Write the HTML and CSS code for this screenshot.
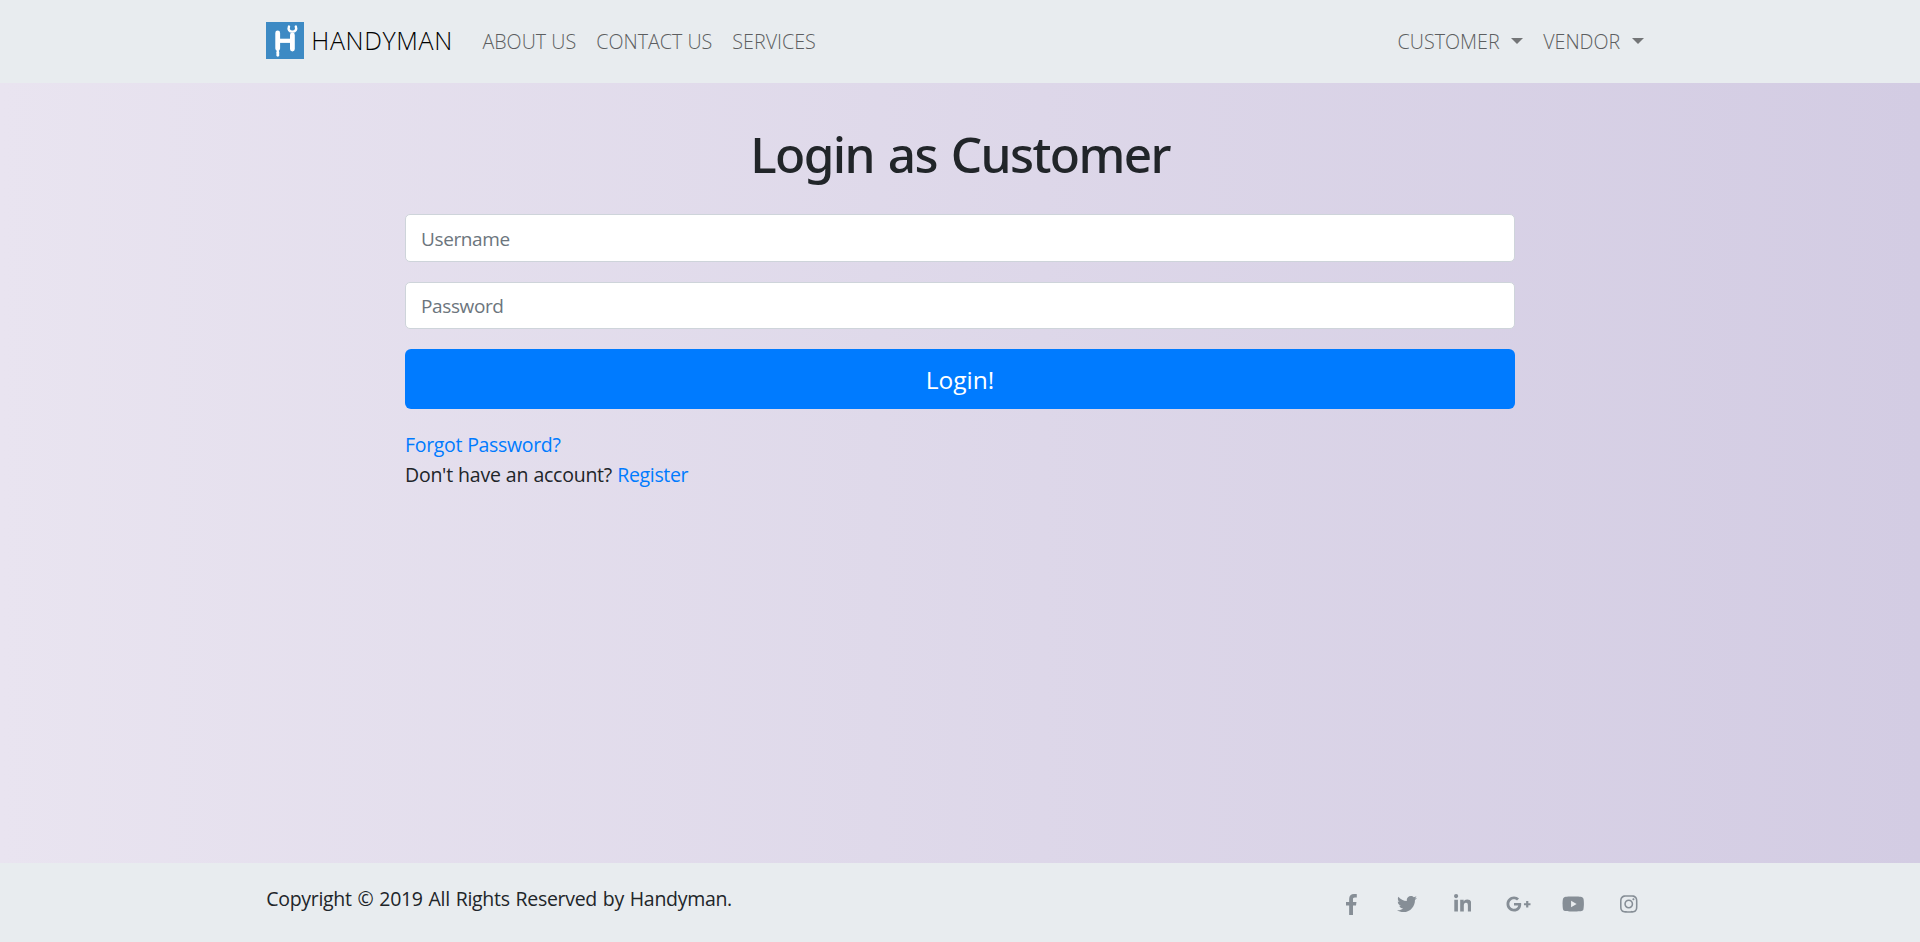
FILE: index.html
```html
<!DOCTYPE html>
<html lang="en">
<head>
<meta charset="utf-8">
<title>Handyman</title>
<link rel="stylesheet" href="styles.css">
</head>
<body>
<header class="navbar">
  <div class="container">
    <a class="brand" href="#">
      <svg class="logo" viewBox="0 0 38 37" aria-hidden="true">
        <rect width="38" height="37" fill="#3d8ac4"/>
        <g fill="none" stroke="#fff" stroke-linecap="round">
          <path d="M11.7 11V26.500M26.400 13V27" stroke-width="4.800"/>
          <path d="M12 18.800H26" stroke-width="4.200" stroke-linecap="butt"/>
          <path d="M11.800 27V29" stroke-width="2"/>
          <path d="M11.800 30.200V33.300" stroke-width="2.800"/>
          <path d="M23 4.500C21.800 7.600 23.400 9.600 26.400 9.600C29.400 9.600 31 7.600 29.800 4.500" stroke-width="2.400"/>
        </g>
      </svg>
      <span class="brand-name">HANDYMAN</span>
    </a>
    <nav class="links">
      <a href="#">ABOUT US</a>
      <a href="#">CONTACT US</a>
      <a href="#">SERVICES</a>
    </nav>
    <nav class="links accounts">
      <a href="#">CUSTOMER<i class="caret"></i></a>
      <a href="#">VENDOR<i class="caret"></i></a>
    </nav>
  </div>
</header>
<main class="page">
  <form class="login">
    <h1>Login as Customer</h1>
    <input class="field" type="text" placeholder="Username">
    <input class="field" type="password" placeholder="Password">
    <button class="submit" type="button">Login!</button>
    <p class="line"><a class="forgot" href="#">Forgot Password?</a></p>
    <p class="line">Don't have an account? <a class="register" href="#">Register</a></p>
  </form>
</main>
<footer class="footer">
  <div class="container">
    <p class="copyright">Copyright © 2019 All Rights Reserved by Handyman.</p>
    <ul class="social">
      <li><svg viewBox="0 0 264 512" width="10.8" height="21"><path d="M215.8 85H264V3.6C255.7 2.500 227.100 0 193.800 0 124.300 0 76.700 42.400 76.700 120.300V192H0v91h76.700v229h94V283h73.600l11.700-91h-85.300v-62.700c0-26.300 7.300-44.300 45.100-44.300z"/></svg></li>
      <li><svg viewBox="0 0 512 512" width="20" height="20"><path d="M459.370 151.716c.325 4.548.325 9.097.325 13.645 0 138.720-105.583 298.558-298.558 298.558-59.452 0-114.680-17.219-161.137-47.106 8.447.974 16.568 1.299 25.340 1.299 49.055 0 94.213-16.568 130.274-44.832-46.132-.975-84.792-31.188-98.112-72.772 6.498.974 12.995 1.624 19.818 1.624 9.421 0 18.843-1.300 27.614-3.573-48.081-9.747-84.143-51.980-84.143-102.985v-1.299c13.969 7.797 30.214 12.670 47.431 13.319-28.264-18.843-46.781-51.005-46.781-87.391 0-19.492 5.197-37.360 14.294-52.954 51.655 63.675 129.300 105.258 216.365 109.807-1.624-7.797-2.599-15.918-2.599-24.040 0-57.828 46.782-104.934 104.934-104.934 30.213 0 57.502 12.670 76.670 33.137 23.715-4.548 46.456-13.320 66.599-25.340-7.798 24.366-24.366 44.833-46.132 57.827 21.117-2.273 41.584-8.122 60.426-16.243-14.292 20.791-32.161 39.308-52.628 54.253z"/></svg></li>
      <li><svg viewBox="0 0 448 512" width="17.500" height="20"><path d="M100.280 448H7.400V148.900h92.880zM53.790 108.100C24.090 108.100 0 83.500 0 53.800a53.790 53.790 0 0 1 107.580 0c0 29.700-24.100 54.300-53.790 54.300zM447.900 448h-92.680V302.400c0-34.700-.7-79.200-48.290-79.200-48.290 0-55.690 37.700-55.690 76.700V448h-92.780V148.900h89.080v40.800h1.300c12.400-23.500 42.690-48.300 87.880-48.300 94 0 111.280 61.900 111.280 142.300V448z"/></svg></li>
      <li><svg viewBox="0 0 640 512" width="25" height="20"><path d="M386.061 228.496c1.834 9.692 3.143 19.384 3.143 31.956C389.204 370.205 315.599 448 204.800 448c-106.084 0-192-85.915-192-192s85.916-192 192-192c51.864 0 95.083 18.859 128.611 50.292l-52.126 50.030c-14.145-13.621-39.028-29.599-76.485-29.599-65.484 0-118.920 54.221-118.920 121.277 0 67.056 53.436 121.277 118.920 121.277 75.961 0 104.513-54.745 108.965-82.773H204.800v-66.009h181.261zm185.406 6.437V179.200h-56.001v55.733h-55.733v56.001h55.733v55.733h56.001v-55.733H627.200v-56.001h-55.733z"/></svg></li>
      <li><svg viewBox="0 0 576 512" width="22.500" height="20"><path d="M549.655 124.083c-6.281-23.650-24.787-42.276-48.284-48.597C458.781 64 288 64 288 64S117.220 64 74.629 75.486c-23.497 6.322-42.003 24.947-48.284 48.597-11.412 42.867-11.412 132.305-11.412 132.305s0 89.438 11.412 132.305c6.281 23.650 24.787 41.500 48.284 47.821C117.220 448 288 448 288 448s170.780 0 213.371-11.486c23.497-6.321 42.003-24.171 48.284-47.821 11.412-42.867 11.412-132.305 11.412-132.305s0-89.438-11.412-132.305zm-317.510 213.508V175.185l142.739 81.205-142.739 81.201z"/></svg></li>
      <li><svg viewBox="0 0 448 512" width="17.500" height="20"><path d="M224.100 141c-63.600 0-114.900 51.300-114.900 114.900s51.300 114.900 114.900 114.900S339 319.500 339 255.900 287.700 141 224.100 141zm0 189.600c-41.100 0-74.700-33.500-74.700-74.700s33.500-74.700 74.700-74.700 74.700 33.500 74.700 74.700-33.600 74.700-74.700 74.700zm146.400-194.300c0 14.900-12 26.800-26.800 26.800-14.900 0-26.800-12-26.800-26.800s12-26.800 26.800-26.800 26.800 12 26.800 26.800zm76.100 27.200c-1.700-35.900-9.900-67.700-36.200-93.900-26.200-26.200-58-34.400-93.900-36.200-37-2.100-147.900-2.100-184.900 0-35.800 1.700-67.600 9.900-93.900 36.100s-34.400 58-36.200 93.900c-2.100 37-2.100 147.900 0 184.900 1.700 35.900 9.900 67.700 36.200 93.900s58 34.400 93.900 36.200c37 2.100 147.900 2.100 184.900 0 35.900-1.700 67.700-9.900 93.900-36.200 26.200-26.200 34.400-58 36.200-93.900 2.100-37 2.100-147.800 0-184.800zM398.800 388c-7.800 19.600-22.900 34.700-42.600 42.600-29.500 11.700-99.500 9-132.100 9s-102.700 2.600-132.100-9c-19.600-7.800-34.700-22.900-42.600-42.600-11.700-29.500-9-99.500-9-132.100s-2.600-102.700 9-132.100c7.800-19.600 22.900-34.700 42.600-42.600 29.500-11.700 99.500-9 132.100-9s102.700-2.600 132.100 9c19.600 7.800 34.700 22.900 42.600 42.600 11.700 29.500 9 99.500 9 132.100s2.700 102.700-9 132.100z"/></svg></li>
    </ul>
  </div>
</footer>
</body>
</html>
```
FILE: styles.css
```css
* { box-sizing: border-box; }
body {
  margin: 0;
  height: 100vh;
  display: flex;
  flex-direction: column;
  font: 19.5px/30px "Open Sans", "Noto Sans", sans-serif;
  color: #212529;
  background: linear-gradient(to right, #e9e4f0, #d3cce3);
}
a { color: #007bff; text-decoration: none; }
p, h1, ul { margin: 0; padding: 0; }

.container {
  width: 1387.5px;
  margin: 0 auto;
  display: flex;
}

/* Top bar */
.navbar {
  height: 83px;
  display: flex;
  align-items: center;
  background: #e8ecef;
}
.navbar .container { align-items: center; }
.brand {
  display: flex;
  align-items: center;
  margin-top: -2px;
  color: #000;
}
.logo { display: block; width: 38px; height: 37px; }
.brand-name {
  margin: -1px 0 0 7px;
  font-size: 25px;
  font-weight: 300;
  letter-spacing: 0.65px;
}
.links {
  display: flex;
  gap: 20px;
  margin-left: 29.5px;
  font-size: 19.7px;
  font-weight: 300;
}
.links a { display: flex; align-items: center; color: #5c5e60; }
.accounts { margin-left: auto; padding-right: 10px; }
.caret {
  margin: -2px 0 0 11.5px;
  border: 6px solid transparent;
  border-top-color: #737577;
  border-bottom: 0;
}

/* Login form */
.page { flex: 1; }
.login { width: 1110px; margin: 0 auto; padding-top: 41px; }
.login h1 {
  margin-bottom: 30px;
  font: 500 49.5px/60px "Noto Sans", "Open Sans", sans-serif;
  letter-spacing: -1.6px;
  word-spacing: 2.5px;
  text-align: center;
}
.field {
  display: block;
  width: 100%;
  height: 47.5px;
  margin-bottom: 20px;
  padding: 2px 15px 0;
  border: 1px solid #ced4da;
  border-radius: 5px;
  background: #fff;
  font: inherit;
  font-size: 19px;
  letter-spacing: -0.38px;
}
.field::placeholder { color: #6c757d; opacity: 1; }
.submit {
  display: block;
  width: 100%;
  height: 60px;
  margin-bottom: 21px;
  padding: 1.5px 0 0;
  border: 0;
  border-radius: 6px;
  background: #007bff;
  color: #fff;
  font: inherit;
  font-size: 24.5px;
}
.line { letter-spacing: -0.24px; word-spacing: 0.4px; }
.forgot, .register { letter-spacing: -0.33px; }

/* Footer */
.footer {
  height: 79px;
  padding-top: 21px;
  background: #e8ecef;
}
.copyright { letter-spacing: -0.3px; word-spacing: 1.1px; }
.social {
  display: flex;
  margin-left: auto;
  padding-top: 10px;
  list-style: none;
}
.social li {
  display: flex;
  justify-content: center;
  width: 55.5px;
}
.social svg { display: block; fill: #868e96; }
.social li:last-child { margin-right: -3px; }
```
